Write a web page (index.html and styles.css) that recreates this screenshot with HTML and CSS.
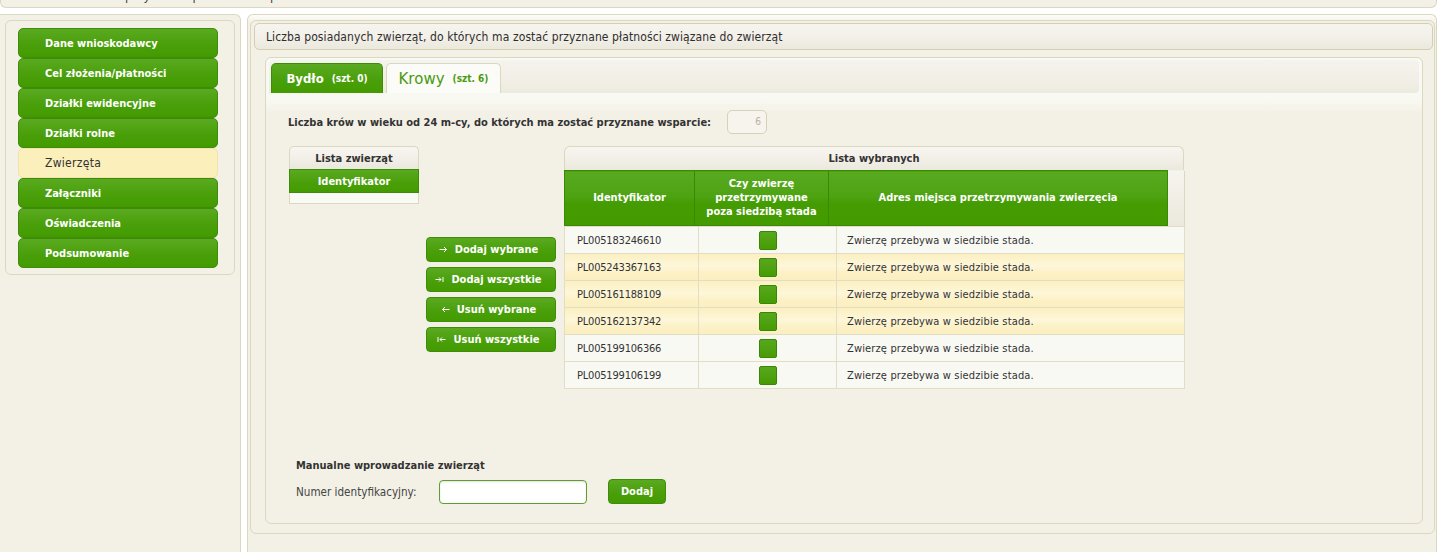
FILE: index.html
```html
<!DOCTYPE html>
<html lang="pl">
<head>
<meta charset="utf-8">
<title>Zwierzęta</title>
<link rel="stylesheet" href="styles.css">
</head>
<body>
<div class="topbar"><span class="topbar-text">Wniosek o przyznanie płatności bezpośrednich</span></div>
<div class="layout">
  <aside class="sidebar">
    <nav class="menu">
      <a class="menu-item">Dane wnioskodawcy</a>
      <a class="menu-item">Cel złożenia/płatności</a>
      <a class="menu-item">Działki ewidencyjne</a>
      <a class="menu-item">Działki rolne</a>
      <a class="menu-item active">Zwierzęta</a>
      <a class="menu-item">Załączniki</a>
      <a class="menu-item">Oświadczenia</a>
      <a class="menu-item">Podsumowanie</a>
    </nav>
  </aside>
  <main class="main">
    <div class="panel">
      <div class="title-bar">Liczba posiadanych zwierząt, do których ma zostać przyznane płatności związane do zwierząt</div>
      <div class="tabs-panel">
        <div class="tabs-head">
          <div class="tab tab-green"><span class="tab-name">Bydło</span><span class="tab-count">(szt. 0)</span></div>
          <div class="tab tab-active"><span class="tab-name">Krowy</span><span class="tab-count">(szt. 6)</span></div>
        </div>
        <div class="tabs-body">
          <div class="count-row">
            <span class="count-label">Liczba krów w wieku od 24 m-cy, do których ma zostać przyznane wsparcie:</span>
            <div class="count-input">6</div>
          </div>
          <div class="lists">
            <div class="source-list">
              <div class="box-caption">Lista zwierząt</div>
              <div class="green-head">Identyfikator</div>
              <div class="empty-row"></div>
            </div>
            <div class="actions">
              <button class="btn"><svg width="9" height="7" viewBox="0 0 9 7"><path d="M0.5 3.5H7.5M5 1L7.5 3.5L5 6" stroke="#fff" fill="none" stroke-width="1"/></svg><span>Dodaj wybrane</span></button>
              <button class="btn"><svg width="9" height="7" viewBox="0 0 9 7"><path d="M0.5 3.5H6M4 1.5L6 3.5L4 5.5M8 1V6" stroke="#fff" fill="none" stroke-width="1"/></svg><span>Dodaj wszystkie</span></button>
              <button class="btn"><svg width="9" height="7" viewBox="0 0 9 7"><path d="M8.5 3.5H1.5M4 1L1.5 3.5L4 6" stroke="#fff" fill="none" stroke-width="1"/></svg><span>Usuń wybrane</span></button>
              <button class="btn"><svg width="9" height="7" viewBox="0 0 9 7"><path d="M8.5 3.5H3M5 1.5L3 3.5L5 5.5M1 1V6" stroke="#fff" fill="none" stroke-width="1"/></svg><span>Usuń wszystkie</span></button>
            </div>
            <div class="selected">
              <div class="box-caption">Lista wybranych</div>
              <table class="head-table">
                <tr>
                  <th class="c1">Identyfikator</th>
                  <th class="c2">Czy zwierzę przetrzymywane poza siedzibą stada</th>
                  <th class="c3">Adres miejsca przetrzymywania zwierzęcia</th>
                  <td class="spacer"></td>
                </tr>
              </table>
              <table class="body-table">
                <tr><td class="b1">PL005183246610</td><td class="b2"><span class="flag"></span></td><td class="b3">Zwierzę przebywa w siedzibie stada.</td></tr>
                <tr class="hl"><td class="b1">PL005243367163</td><td class="b2"><span class="flag"></span></td><td class="b3">Zwierzę przebywa w siedzibie stada.</td></tr>
                <tr class="hl"><td class="b1">PL005161188109</td><td class="b2"><span class="flag"></span></td><td class="b3">Zwierzę przebywa w siedzibie stada.</td></tr>
                <tr class="hl"><td class="b1">PL005162137342</td><td class="b2"><span class="flag"></span></td><td class="b3">Zwierzę przebywa w siedzibie stada.</td></tr>
                <tr><td class="b1">PL005199106366</td><td class="b2"><span class="flag"></span></td><td class="b3">Zwierzę przebywa w siedzibie stada.</td></tr>
                <tr><td class="b1">PL005199106199</td><td class="b2"><span class="flag"></span></td><td class="b3">Zwierzę przebywa w siedzibie stada.</td></tr>
              </table>
            </div>
          </div>
          <div class="manual">
            <div class="manual-title">Manualne wprowadzanie zwierząt</div>
            <div class="manual-row">
              <span class="manual-label">Numer identyfikacyjny:</span>
              <input class="manual-input" type="text">
              <button class="btn btn-add">Dodaj</button>
            </div>
          </div>
        </div>
      </div>
    </div>
  </main>
</div>
</body>
</html>
```
FILE: styles.css
```css
* { box-sizing: border-box; }
html, body { margin: 0; padding: 0; }
body {
  background: #ffffff;
  font-family: "DejaVu Sans Condensed", "DejaVu Sans", sans-serif;
  font-stretch: condensed;
  font-size: 11px;
  color: #333;
  height: 552px;
  overflow: hidden;
}

.topbar {
  height: 8px;
  margin-right: 3px;
  background: #f3f1e6;
  border: 1px solid #dcd7bf;
  border-top: 0;
  border-radius: 0 0 6px 6px;
  overflow: hidden;
}
.topbar-text {
  display: block;
  margin-top: -11px;
  padding-left: 60px;
  font-size: 13px;
  line-height: 14px;
  color: #444;
}

.layout {
  display: flex;
  margin-top: 6px;
  height: 538px;
}

.sidebar {
  width: 241px;
  padding: 5px 5px 0 5px;
  background: #f3f1e6;
  border-top: 1px solid #dcd7bf;
  border-right: 1px solid #dcd7bf;
  border-top-right-radius: 6px;
}
.menu {
  border: 1px solid #dcd7bf;
  border-radius: 6px;
  padding: 7px 16px 6px 12px;
  background: #f3f1e6;
}
.menu-item {
  display: flex;
  align-items: center;
  height: 30px;
  padding-left: 26px;
  border: 1px solid #3f8c0b;
  border-radius: 5px;
  background: linear-gradient(#5aaa21, #4a9f0a 55%, #439b00);
  color: #fff;
  font-weight: bold;
  font-size: 11px;
  text-decoration: none;
}
.menu-item.active {
  background: #fbefbb;
  border-color: #f0e4aa;
  color: #333;
  font-weight: normal;
  font-size: 12px;
  letter-spacing: 0.3px;
}

.main {
  flex: 1;
  margin-left: 6px;
  margin-right: 3px;
  border: 1px solid #dcd7bf;
  border-bottom: 0;
  border-radius: 6px 6px 0 0;
  background: linear-gradient(#fdfcf8, #f3f1e6 8px);
  padding: 5px 1px 0 2px;
}
.panel {
  height: 514px;
  border: 1px solid #dcd7bf;
  border-radius: 6px;
  background: #f3f1e6;
  padding: 2px 1px 0 3px;
  display: flex;
  flex-direction: column;
}
.title-bar {
  height: 27px;
  flex: none;
  border: 1px solid #d5ceb4;
  border-radius: 5px;
  background: linear-gradient(#f6f4ee, #f2f0e8 55%, #ebe8dc);
  padding-left: 11px;
  display: flex;
  align-items: center;
  font-size: 12px;
  letter-spacing: 0.1px;
  color: #2e2e2e;
}

.tabs-panel {
  flex: 1;
  margin: 7px 10px 9px 11px;
  border: 1px solid #dcd7bf;
  border-radius: 6px;
  background: linear-gradient(#f9f9f3 0, #f9f9f3 40px, #f3f1e6 56px);
  display: flex;
  flex-direction: column;
}
.tabs-head {
  margin: 2px 3px 0 3px;
  height: 33px;
  padding: 3px 0 0 2px;
  border-radius: 4px 4px 4px 0;
  background: linear-gradient(#f5f3ed, #f2efe7 55%, #edeadf);
  display: flex;
  align-items: flex-end;
  gap: 3px;
}
.tab {
  height: 30px;
  border: 1px solid;
  border-bottom: 0;
  border-radius: 5px 5px 0 0;
  display: flex;
  align-items: center;
  justify-content: center;
  gap: 8px;
}
.tab-green {
  width: 112px;
  border-color: #3f8c0b;
  background: linear-gradient(#5aaa21, #4a9f0a 55%, #439b00);
  color: #fff;
}
.tab-green .tab-name { font-size: 13px; font-weight: bold; }
.tab-active {
  width: 115px;
  border-color: #dcd7bf;
  background: #fbfbf7;
  color: #4b9a12;
}
.tab-active .tab-name { font-size: 15px; font-stretch: normal; font-family: "DejaVu Sans", sans-serif; }
.tab-count { font-size: 10px; font-weight: bold; }

.tabs-body {
  padding-left: 22px;
}
.count-row {
  margin-top: 17px;
  display: flex;
  align-items: center;
  gap: 16px;
  height: 24px;
}
.count-label { font-weight: bold; color: #333; }
.count-input {
  width: 40px;
  height: 24px;
  border: 1px solid #d6d1ba;
  border-radius: 5px;
  background: #f6f4ec;
  color: #b8b39e;
  font-size: 10px;
  text-align: right;
  padding-right: 5px;
  line-height: 22px;
}

.lists {
  margin-top: 12px;
  display: flex;
  align-items: flex-start;
}
.box-caption {
  height: 24px;
  border: 1px solid #dcd7bf;
  border-bottom: 0;
  border-radius: 6px 6px 0 0;
  background: linear-gradient(#f7f5f0, #f1efe7 55%, #ebe8dd);
  display: flex;
  align-items: center;
  justify-content: center;
  font-weight: bold;
  color: #333;
}
.source-list { width: 130px; margin-left: 1px; margin-right: 7px; }
.source-list .box-caption { height: 23px; border-radius: 5px 5px 0 0; }
.green-head {
  height: 24px;
  border: 1px solid #3f8c0b;
  background: linear-gradient(#5aaa21, #4a9f0a 55%, #439b00);
  color: #fff;
  font-weight: bold;
  display: flex;
  align-items: center;
  justify-content: center;
}
.empty-row {
  height: 11px;
  background: #fafaf5;
  border: 1px solid #dcd7bf;
  border-top: 0;
}

.actions {
  margin-top: 91px;
  margin-right: 8px;
  width: 130px;
  display: flex;
  flex-direction: column;
  gap: 5px;
}
.btn {
  height: 25px;
  border: 1px solid #3f8c0b;
  border-radius: 4px;
  background: linear-gradient(#5aaa21, #4a9f0a 55%, #439b00);
  color: #fff;
  font-family: inherit;
  font-stretch: condensed;
  font-size: 11px;
  font-weight: bold;
  display: flex;
  align-items: center;
  justify-content: center;
  gap: 7px;
  padding: 0 5px 0 0;
  cursor: pointer;
}

.selected { width: 620px; }
table { border-collapse: collapse; table-layout: fixed; }
.head-table { width: 620px; }
.head-table th {
  height: 55px;
  border: 1px solid #3b8806;
  background: linear-gradient(#58a91f, #4ea313 45%, #449c02 60%, #449b00);
  color: #fff;
  font-weight: bold;
  font-size: 11px;
  line-height: 14px;
  text-align: center;
  vertical-align: middle;
  padding: 0 6px;
}
.head-table .c1 { width: 130px; }
.head-table .c2 { width: 134px; }
.head-table .c3 { width: 339px; }
.head-table .spacer {
  width: 17px;
  background: linear-gradient(#f6f4ef, #f0ede4 55%, #ebe8dd);
  border-right: 1px solid #dcd7bf;
  padding: 0;
}
.body-table { width: 620px; }
.body-table td {
  height: 27px;
  border: 1px solid #e3ddc6;
  background: #f9f9f4;
  font-size: 11px;
  color: #333;
  padding: 0 0 0 10px;
  vertical-align: middle;
  letter-spacing: 0.15px;
}
.body-table tr.hl td {
  background: linear-gradient(#fcf0c2, #fdf6d9 45%, #fcf1c6 70%, #fbefbf);
}
.body-table .b1 { width: 134px; letter-spacing: -0.2px; padding-left: 12px; }
.body-table .b2 { width: 138px; text-align: center; padding: 0; }
.body-table .b3 { width: 348px; }
.flag {
  display: inline-block;
  width: 18px;
  height: 19px;
  vertical-align: middle;
  border: 1px solid #3a8705;
  border-radius: 2px;
  background: linear-gradient(#58a71e, #469c04);
}

.manual {
  margin-top: 69px;
  padding-left: 8px;
}
.manual-title {
  font-size: 11px;
  font-weight: bold;
  line-height: 16px;
  color: #333;
}
.manual-row {
  margin-top: 5px;
  display: flex;
  align-items: center;
  height: 25px;
}
.manual-label {
  width: 143px;
  color: #444;
  font-size: 11.6px;
}
.manual-input {
  width: 148px;
  height: 24px;
  border: 1px solid #5e9e2e;
  border-radius: 4px;
  background: #fff;
  box-shadow: inset 0 1px 2px rgba(0,0,0,0.12);
  margin: 0;
  padding: 0 4px;
}
.btn-add {
  width: 58px;
  margin-left: 21px;
  padding: 0;
}
```
